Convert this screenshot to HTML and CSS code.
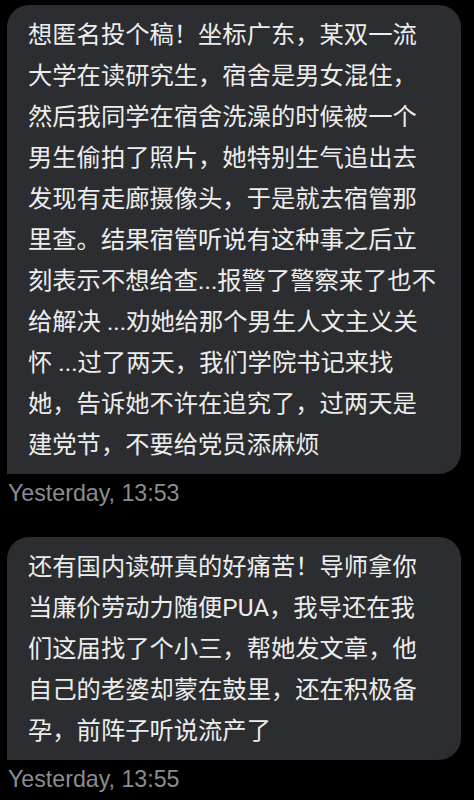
FILE: index.html
```html
<!DOCTYPE html>
<html lang="zh-CN">
<head>
<meta charset="utf-8">
<title>Messages</title>
<link rel="stylesheet" href="styles.css">
</head>
<body>
<main class="chat">
  <section class="message">
    <div class="bubble">想匿名投个稿！坐标广东，某双一流<br>大学在读研究生，宿舍是男女混住，<br>然后我同学在宿舍洗澡的时候被一个<br>男生偷拍了照片，她特别生气追出去<br>发现有走廊摄像头，于是就去宿管那<br>里查。结果宿管听说有这种事之后立<br>刻表示不想给查...报警了警察来了也不<br>给解决 ...劝她给那个男生人文主义关<br>怀 ...过了两天，我们学院书记来找<br>她，告诉她不许在追究了，过两天是<br>建党节，不要给党员添麻烦</div>
    <div class="time">Yesterday, 13:53</div>
  </section>
  <section class="message">
    <div class="bubble">还有国内读研真的好痛苦！导师拿你<br>当廉价劳动力随便PUA，我导还在我<br>们这届找了个小三，帮她发文章，他<br>自己的老婆却蒙在鼓里，还在积极备<br>孕，前阵子听说流产了</div>
    <div class="time">Yesterday, 13:55</div>
  </section>
</main>
</body>
</html>
```

FILE: styles.css
```css
html, body {
  margin: 0;
  padding: 0;
  background: #000;
}

.chat {
  display: flex;
  flex-direction: column;
  gap: 31px;
  padding: 5px 13px 0 7px;
}

.message {
  display: flex;
  flex-direction: column;
}

.bubble {
  background: #2c2d30;
  color: #ededed;
  font-family: Roboto, "Noto Sans CJK SC", sans-serif;
  font-size: 24.3px;
  line-height: 41px;
  padding: 9px 10px 9px 21px;
  border-radius: 22px 22px 22px 0;
  white-space: nowrap;
}

.time {
  margin-top: 6px;
  padding-left: 1px;
  color: #8c8c90;
  font-family: "Liberation Sans", Arial, sans-serif;
  font-size: 23.2px;
  line-height: 26px;
}
```
